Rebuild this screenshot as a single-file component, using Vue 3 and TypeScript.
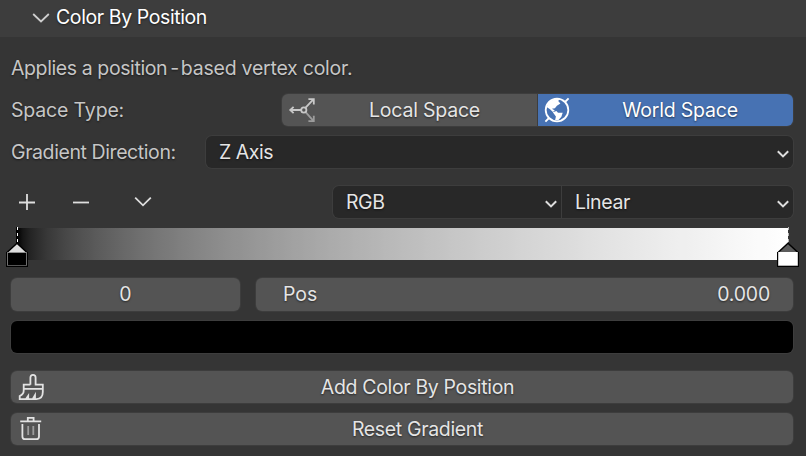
<script setup lang="ts">
interface Stop {
  id: number
  pos: number
  fill: string
  roof: string
  line: string
  active: boolean
}

const stops: Stop[] = [
  { id: 0, pos: 0, fill: '#000000', roof: '#dddddd', line: '#8c8c8c', active: true },
  { id: 1, pos: 1, fill: '#ffffff', roof: '#5c5c5c', line: '#ffffff', active: false },
]

// Linear-light value to display-encoded 8-bit channel
function encode(v: number): number {
  const s = v <= 0.0031308 ? v * 12.92 : 1.055 * Math.pow(v, 1 / 2.4) - 0.055
  return Math.round(s * 255)
}

const samples = 128
const ramp = Array.from({ length: samples + 1 }, (_, i) => {
  const t = i / samples
  const c = encode(t)
  return `rgb(${c},${c},${c}) ${(t * 100).toFixed(2)}%`
}).join(', ')
const rampStyle = { backgroundImage: `linear-gradient(to right, ${ramp})` }
</script>

<template>
  <div class="panel">
    <header class="head">
      <svg class="head-arrow" width="18" height="12" viewBox="0 0 18 12"><path d="M1.2 2 L9 9.4 L16.8 2" /></svg>
      <span class="t title">Color By Position</span>
    </header>

    <div class="body">
      <div class="row desc"><span class="t t-desc"><span class="lead">Applies a position</span><span class="hyphen">-</span>based vertex color.</span></div>

      <div class="row space">
        <span class="t t-space">Space Type:</span>
        <div class="segments">
          <button class="seg">
            <svg class="ico" width="30" height="30" viewBox="0 0 30 30">
              <path class="stroke dim" d="M18.6 17.2L26 25.4M21.4 26.2H26.8V20.8" />
              <g class="stroke soft">
                <path d="M14.2 15H3.4M6.6 11.8L3.2 15L6.6 18.2" />
                <path d="M18.6 12.6L26.4 4.4M21.4 4.1H26.8V9.6" />
                <circle cx="16.8" cy="15" r="2.6" />
              </g>
            </svg>
            <span class="t t-local">Local Space</span>
          </button>
          <button class="seg on">
            <svg class="ico" width="30" height="30" viewBox="0 0 30 30">
              <circle class="stroke white" cx="15" cy="15" r="11.3" />
              <path class="stroke white" d="M23 7L26.6 3.4M7 23L3.4 26.6" />
              <path class="land" d="M4.6 12L7.2 7L12.2 4H17.8L16.2 6.1L18.4 8.4L14.9 10.8L12.9 13.2L9.9 13.8L12.8 15.5L10.9 17L8 14.2Z" />
              <path class="land" d="M10.8 17.3L14.4 16L16 17.8H20.7L19.4 21.8L16.3 25.3H13.1L13.9 21.4Z" />
            </svg>
            <span class="t t-world">World Space</span>
          </button>
        </div>
      </div>

      <div class="row direction">
        <span class="t t-dir">Gradient Direction:</span>
        <div class="drop drop-dir">
          <span class="t t-z">Z Axis</span>
          <svg class="chev" width="14" height="10" viewBox="0 0 14 10"><path d="M1.8 2.2L7 7.4L12.2 2.2" /></svg>
        </div>
      </div>

      <div class="row tools">
        <div class="actions">
          <svg width="18" height="18" viewBox="0 0 18 18"><path d="M1 9.5H17M9 1V17" /></svg>
          <svg width="18" height="18" viewBox="0 0 18 18"><path d="M1 9.5H17" /></svg>
          <svg class="more" width="18" height="18" viewBox="0 0 18 18"><path d="M1.2 4.7L9 12.3L16.8 4.7" /></svg>
        </div>
        <div class="pair">
          <div class="drop drop-rgb">
            <span class="t t-rgb">RGB</span>
            <svg class="chev" width="14" height="10" viewBox="0 0 14 10"><path d="M1.8 2.2L7 7.4L12.2 2.2" /></svg>
          </div>
          <div class="drop drop-linear">
            <span class="t t-linear">Linear</span>
            <svg class="chev" width="14" height="10" viewBox="0 0 14 10"><path d="M1.8 2.2L7 7.4L12.2 2.2" /></svg>
          </div>
        </div>
      </div>

      <div class="ramp" :style="rampStyle">
        <svg
          v-for="s in stops"
          :key="s.id"
          class="handle"
          :style="{ left: s.pos * 100 + '%' }"
          width="22"
          height="40"
          viewBox="0 0 22 40"
        >
          <path v-if="s.active" d="M10.5 0V17" stroke="#000" />
          <path d="M11.5 0V16" :stroke="s.active ? '#fff' : '#b8b8b8'" stroke-dasharray="3 3" />
          <path d="M11 16.2L1 25.5V39H21V25.5Z" :fill="s.roof" stroke="#000" stroke-width="1.5" />
          <rect x="1.5" y="25.5" width="19" height="13.2" :fill="s.fill" :stroke="s.line" />
          <path d="M.6 25V39.4H21.4V25" fill="none" stroke="#000" stroke-width="1.2" />
        </svg>
      </div>

      <div class="row fields">
        <div class="field index"><span class="t t-zero">0</span></div>
        <div class="field pos">
          <span class="t t-pos">Pos</span>
          <span class="t t-num">0.000</span>
        </div>
      </div>

      <div class="swatch"></div>

      <button class="wide add">
        <svg class="ico" width="30" height="30" viewBox="0 0 30 30">
          <path class="stroke" d="M14.4 12.7V5.6Q14.4 2.8 17 2.8Q19.6 2.8 19.6 5.6V12.7H26.8V20Q26.8 26.8 20.5 27.1H3.7V24Q7.7 22.4 7.7 18.8V12.7H14.4" />
          <path class="stroke" d="M7.7 16.9H26.8M10 27L12.2 23.8V27M16.8 27L19 23.2V27" />
        </svg>
        <span class="t t-add">Add Color By Position</span>
      </button>
      <button class="wide reset">
        <svg class="ico" width="30" height="30" viewBox="0 0 30 30">
          <path class="stroke" d="M4.2 7.4H25.2M11.8 7V3.8H17.6V7" />
          <path class="stroke" d="M6.4 10V22.4Q6.4 25.2 9.2 25.2H20.2Q23 25.2 23 22.4V10" />
          <path class="stroke dim" d="M12.2 12V21M17.3 12V21" />
        </svg>
        <span class="t t-reset">Reset Gradient</span>
      </button>
    </div>
  </div>
</template>

<style>
body {
  margin: 0;
  background: #353535;
}
</style>

<style scoped>
.panel {
  box-sizing: border-box;
  width: 806px;
  height: 456px;
  overflow: hidden;
  background: #353535;
  color: #e5e5e5;
  font-family: Inter, "Liberation Sans", sans-serif;
  font-size: 19.5px;
  line-height: 32px;
}
.t {
  white-space: pre;
  text-shadow: 0 1px 2px rgba(0, 0, 0, 0.55);
}
.title {
  letter-spacing: -0.4px;
}
.t-desc {
  letter-spacing: -0.24px;
}
.lead {
  letter-spacing: -0.4px;
}
.hyphen {
  margin: 0 2px 0 3px;
}
.t-space {
  letter-spacing: -0.16px;
}
.t-dir {
  letter-spacing: -0.41px;
}
.t-local,
.t-world,
.t-num {
  letter-spacing: -0.2px;
}
.t-z,
.t-rgb {
  letter-spacing: -0.45px;
}
.t-linear,
.t-add,
.t-reset {
  letter-spacing: -0.34px;
}
.head {
  display: flex;
  align-items: center;
  height: 37px;
  padding-left: 32px;
  gap: 6px;
  background: #3d3d3d;
}
.head .t {
  margin-top: -4px;
  color: #fff;
}
.head-arrow {
  margin-top: -2px;
}
svg {
  display: block;
  flex: none;
  overflow: visible;
}
.head-arrow path,
.chev path,
.actions path {
  fill: none;
  stroke: #dedede;
  stroke-width: 1.8;
}
.head-arrow path {
  stroke: #cfcfcf;
}
.chev path {
  stroke-width: 2;
}
.body {
  display: flex;
  flex-direction: column;
  padding: 15px 13px 0 11px;
}
.row {
  display: flex;
  height: 32px;
}
.desc,
.space > .t,
.direction > .t {
  color: #c6c6c6;
}
.space {
  margin-top: 10px;
  justify-content: space-between;
}
.segments {
  display: flex;
  width: 511px;
  gap: 1px;
  border-radius: 6px;
  background: #3d3d3d;
  box-shadow: 0 0 0 1px #3d3d3d, 0 2px 0 -1px #2d2d2d;
}
button {
  margin: 0;
  padding: 0;
  border: 0;
  color: inherit;
  font: inherit;
  background: #545454;
}
.seg,
.wide {
  display: grid;
  grid-template-columns: 30px 1fr;
  align-items: center;
  padding: 0 4px 0 5px;
}
.seg {
  width: 255px;
  padding-right: 5px;
  border-radius: 6px 0 0 6px;
}
.seg.on {
  padding-left: 4px;
  background: #4772b3;
  border-radius: 0 6px 6px 0;
  color: #fff;
}
.stroke {
  fill: none;
  stroke: #e3e3e3;
  stroke-width: 1.8;
}
.soft {
  stroke: #c8c8c8;
}
.dim {
  stroke: #9c9c9c;
}
.white {
  stroke: #fff;
}
.land {
  fill: #fff;
}
.direction {
  margin-top: 10px;
  justify-content: space-between;
}
.drop {
  display: flex;
  box-sizing: border-box;
  align-items: center;
  justify-content: space-between;
  height: 32px;
  padding: 0 3.5px 0 13px;
  background: #282828;
  border-radius: 6px;
  box-shadow: 0 0 0 1px #3d3d3d;
}
.chev {
  margin-top: 3px;
}
.drop-dir {
  width: 587px;
}
.tools {
  margin-top: 18px;
  justify-content: space-between;
}
.actions {
  display: flex;
  align-items: center;
  padding-left: 7px;
  gap: 36px;
}
.actions .more {
  margin-left: 8px;
}
.pair {
  display: flex;
  gap: 1px;
  width: 460px;
}
.drop-rgb {
  width: 228px;
  border-radius: 6px 0 0 6px;
}
.drop-linear {
  width: 231px;
  border-radius: 0 6px 6px 0;
}
.ramp {
  position: relative;
  height: 32px;
  margin: 10px 5px 0 6px;
}
.handle {
  position: absolute;
  top: -1px;
  margin-left: -11px;
}
.fields {
  height: 33px;
  margin-top: 18px;
  gap: 16px;
}
.field {
  display: flex;
  box-sizing: border-box;
  background: #545454;
  border-radius: 6px;
  box-shadow: 0 0 0 1px #3d3d3d, 0 2px 0 -1px #2d2d2d;
}
.index {
  width: 229px;
  justify-content: center;
}
.pos {
  flex: 1;
  justify-content: space-between;
  padding: 0 23px 0 27px;
}
.swatch {
  height: 32px;
  margin-top: 10px;
  background: #000;
  border-radius: 6px;
  box-shadow: 0 0 0 1px #3d3d3d;
}
.wide {
  height: 32px;
  border-radius: 6px;
  box-shadow: 0 0 0 1px #3d3d3d, 0 2px 0 -1px #2d2d2d;
}
.add {
  margin-top: 18px;
}
.reset {
  margin-top: 10px;
}
</style>
